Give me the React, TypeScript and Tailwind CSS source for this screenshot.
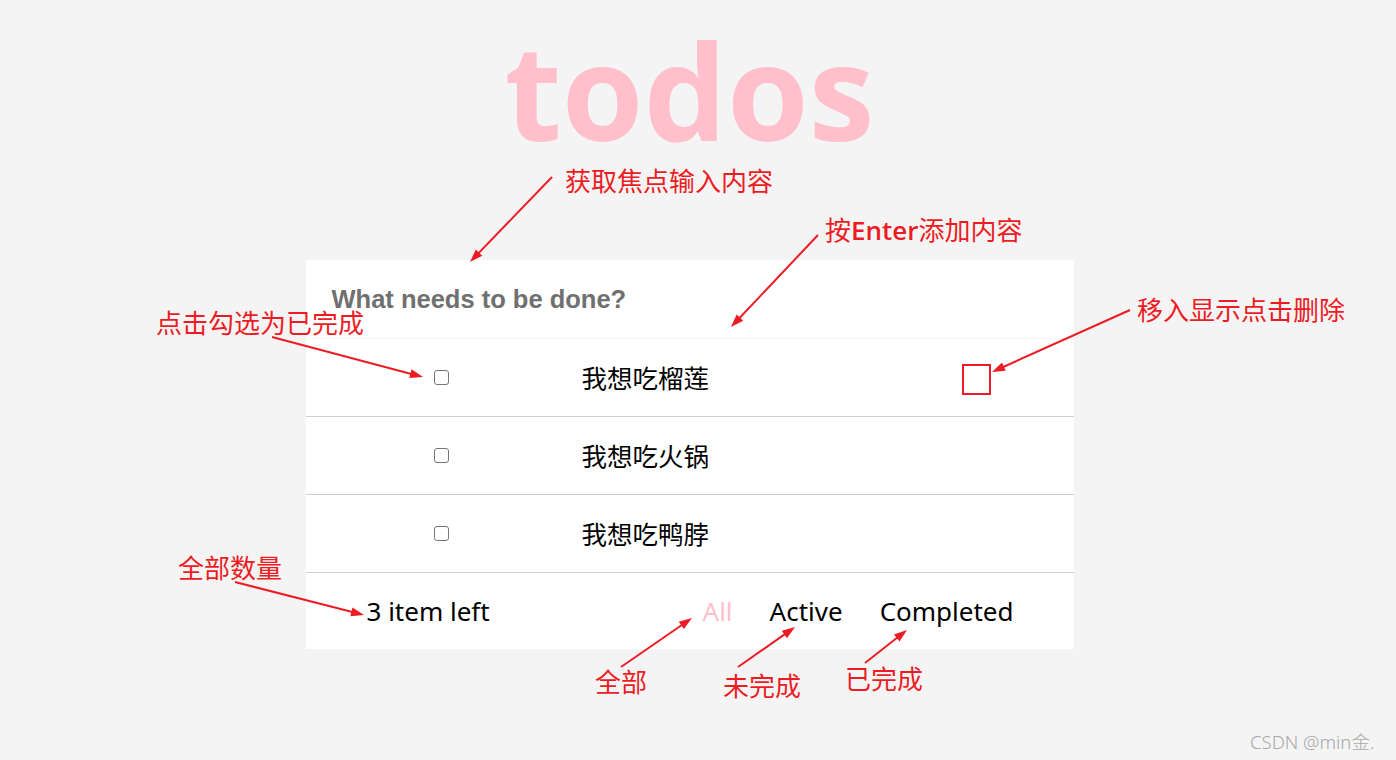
import React from "react";

const RED = "#ed1c24";

const arrows: [number, number, number, number][] = [
  [552, 177, 470, 262],
  [818, 235, 731, 327],
  [1130, 310, 992, 372],
  [272, 337, 423, 377],
  [235, 582, 364, 615],
  [621, 667, 692, 618],
  [738, 667, 795, 627],
  [865, 663, 907, 630],
];

function Arrow({ a }: { a: [number, number, number, number] }) {
  const [x1, y1, x2, y2] = a;
  const dx = x2 - x1;
  const dy = y2 - y1;
  const len = Math.hypot(dx, dy);
  const ux = dx / len;
  const uy = dy / len;
  const hl = 13;
  const hw = 4.5;
  const bx = x2 - ux * hl;
  const by = y2 - uy * hl;
  const px = -uy;
  const py = ux;
  const pts = `${x2},${y2} ${bx + px * hw},${by + py * hw} ${bx - px * hw},${by - py * hw}`;
  return (
    <g>
      <line x1={x1} y1={y1} x2={bx + ux * 2} y2={by + uy * 2} stroke={RED} strokeWidth={2} />
      <polygon points={pts} fill={RED} />
    </g>
  );
}

function Checkbox() {
  return <div className="w-[15px] h-[15px] border border-[#767676] rounded-[3px] bg-white shrink-0" />;
}

const items = ["我想吃榴莲", "我想吃火锅", "我想吃鸭脖"];

const notes: { text: React.ReactNode; left: number; top: number }[] = [
  { text: "获取焦点输入内容", left: 565, top: 167 },
  {
    text: (
      <>
        按<span className="font-semibold" style={{ fontFamily: "'Open Sans', 'Noto Sans', sans-serif" }}>Enter</span>添加内容
      </>
    ),
    left: 825,
    top: 216,
  },
  { text: "移入显示点击删除", left: 1137, top: 296 },
  { text: "点击勾选为已完成", left: 156, top: 309 },
  { text: "全部数量", left: 178, top: 554 },
  { text: "全部", left: 595, top: 668 },
  { text: "未完成", left: 723, top: 672 },
  { text: "已完成", left: 845, top: 665 },
];

export default function App() {
  return (
    <div className="relative h-[760px] w-full bg-[#f4f4f4] overflow-hidden">
      <div className="w-[1379px] flex flex-col items-center">
        <h1
          className="mt-[40px] h-[100px] text-[132px] leading-[100px] font-bold text-[#ffc0cb]"
          style={{ fontFamily: "'Open Sans', 'Noto Sans', sans-serif" }}
        >
          todos
        </h1>
        <div className="mt-[120px] w-[768px] bg-white">
          <div className="h-[79px] flex items-center pl-[26px] border-b border-[#f6f6f6]">
            <span
              className="text-[25.5px] font-bold text-[#707070]"
              style={{ fontFamily: "'Liberation Sans', Arial, sans-serif" }}
            >
              What needs to be done?
            </span>
          </div>
          {items.map((t) => (
            <div key={t} className="h-[78px] flex items-center border-b border-[#cfcfcf]">
              <div className="ml-[128px]">
                <Checkbox />
              </div>
              <span
                className="ml-[133px] text-[25.5px] text-black"
                style={{ fontFamily: "'Noto Sans CJK SC', sans-serif" }}
              >
                {t}
              </span>
            </div>
          ))}
          <div
            className="h-[76px] flex items-center justify-between pl-[61px] pr-[60px] text-[26px] text-black"
            style={{ fontFamily: "'Noto Sans', 'Open Sans', sans-serif" }}
          >
            <span>3 item left</span>
            <div className="flex items-center gap-[37px]">
              <span className="text-[#ffc0cb]">All</span>
              <span>Active</span>
              <span>Completed</span>
            </div>
          </div>
        </div>
      </div>

      {/* annotation overlay */}
      <div className="absolute left-[962px] top-[364px] w-[29px] h-[31px] border-2 border-[#ed1c24]" />
      <svg className="absolute inset-0 pointer-events-none" width={1396} height={760}>
        {arrows.map((a, i) => (
          <Arrow key={i} a={a} />
        ))}
      </svg>
      {notes.map((n, i) => (
        <div
          key={i}
          className="absolute text-[26px] leading-[26px] text-[#ed1c24] whitespace-nowrap"
          style={{ left: n.left, top: n.top, fontFamily: "'Noto Sans CJK SC', sans-serif" }}
        >
          {n.text}
        </div>
      ))}
      <div
        className="absolute left-[1250px] top-[730px] text-[18.5px] leading-[24px] font-light text-[#a8a8a8] whitespace-nowrap"
        style={{ fontFamily: "'Noto Sans', 'Noto Sans CJK SC', sans-serif" }}
      >
        CSDN @min金.
      </div>
    </div>
  );
}
